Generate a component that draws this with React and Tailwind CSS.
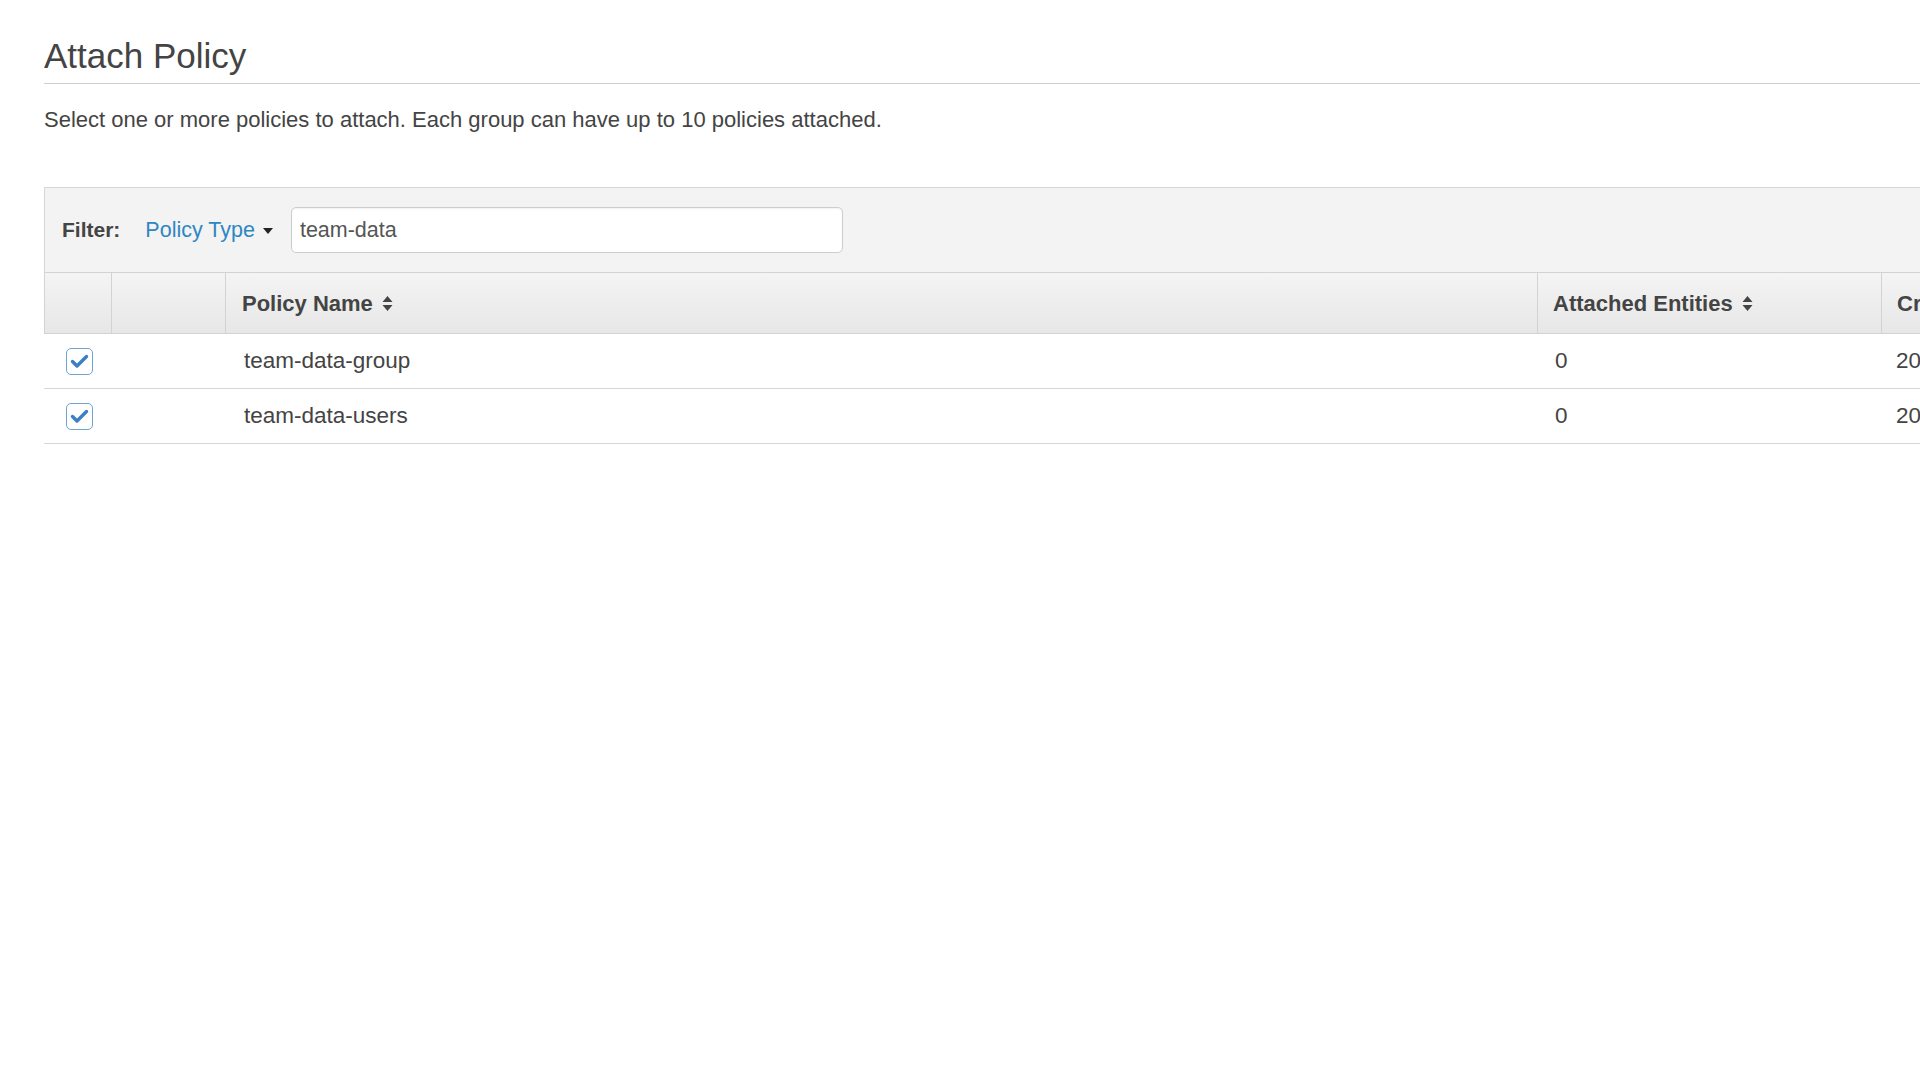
import React from "react";

function SortIcon() {
  return (
    <svg width="11" height="17" viewBox="0 0 11 17" className="ml-[9px] shrink-0">
      <path d="M5.5 1 L10.5 7 L0.5 7 Z" fill="#444" />
      <path d="M5.5 16 L10.5 10 L0.5 10 Z" fill="#444" />
    </svg>
  );
}

function Check() {
  return (
    <div className="w-[27px] h-[27px] rounded-[5px] border-[1.5px] border-[#6fa3d3] bg-white flex items-center justify-center">
      <svg width="19" height="15" viewBox="0 0 19 15">
        <path d="M2.5 7.5 L7 12 L16.5 2.5" fill="none" stroke="#3c7fc3" strokeWidth="3.4" strokeLinecap="round" strokeLinejoin="round" />
      </svg>
    </div>
  );
}

const rows = [
  { name: "team-data-group", entities: "0", created: "2019-05-07 11:42 UTC+0200" },
  { name: "team-data-users", entities: "0", created: "2019-05-07 11:43 UTC+0200" },
];

export default function App() {
  return (
    <div className="w-[1920px] h-[1080px] overflow-hidden bg-white text-[#444] font-['Liberation_Sans',Arial,sans-serif]">
      <div className="pl-[44px] pt-[36px]">
        <h1 className="text-[35px] leading-[40px] font-normal text-[#444] border-b border-[#cfcfcf] pb-[7px]">
          Attach Policy
        </h1>
        <p className="mt-[21px] text-[22px] leading-[30px] text-[#444]">
          Select one or more policies to attach. Each group can have up to 10 policies attached.
        </p>

        <div className="mt-[52px] w-[2400px]">
          <div className="flex items-center border-t border-l border-[#d6d6d6] bg-[#f3f3f3] pt-[19px] pb-[19px] pl-[17px]">
            <span className="text-[21px] font-bold text-[#444]">Filter:</span>
            <span className="ml-[25px] text-[21.5px] text-[#2e87c2]">Policy Type</span>
            <svg width="10" height="6" viewBox="0 0 10 6" className="ml-[8px] mt-[2px]">
              <path d="M0 0 L10 0 L5 6 Z" fill="#222" />
            </svg>
            <div className="ml-[18px] w-[552px] h-[46px] rounded-[5px] border border-[#cdcdcd] bg-white flex items-center pl-[8px] shadow-[inset_0_1px_2px_rgba(0,0,0,0.06)]">
              <span className="text-[21.5px] text-[#555]">team-data</span>
            </div>
          </div>

          <div className="grid grid-cols-[66px_114px_1312px_344px_560px] h-[62px] border-t border-b border-l border-[#d3d3d3] bg-linear-to-b from-[#f4f4f4] to-[#e7e7e7]">
            <div />
            <div className="border-l border-[#d3d3d3]" />
            <div className="border-l border-[#d3d3d3] flex items-center pl-[16px] text-[22px] font-bold text-[#444]">
              Policy Name
              <SortIcon />
            </div>
            <div className="border-l border-[#d3d3d3] flex items-center pl-[15px] text-[22px] font-bold text-[#444]">
              Attached Entities
              <SortIcon />
            </div>
            <div className="border-l border-[#d3d3d3] flex items-center pl-[15px] text-[22px] font-bold text-[#444]">
              Creation Time
              <SortIcon />
            </div>
          </div>

          {rows.map((r) => (
            <div
              key={r.name}
              className="grid grid-cols-[67px_114px_1312px_344px_560px] h-[55px] border-b border-[#d6d6d6] bg-white"
            >
              <div className="flex items-center pl-[22px]">
                <Check />
              </div>
              <div />
              <div className="flex items-center pl-[19px] text-[22.5px] text-[#444]">{r.name}</div>
              <div className="flex items-center pl-[18px] text-[22.5px] text-[#444]">{r.entities}</div>
              <div className="flex items-center pl-[15px] text-[22.5px] text-[#444]">{r.created}</div>
            </div>
          ))}
        </div>
      </div>
    </div>
  );
}
